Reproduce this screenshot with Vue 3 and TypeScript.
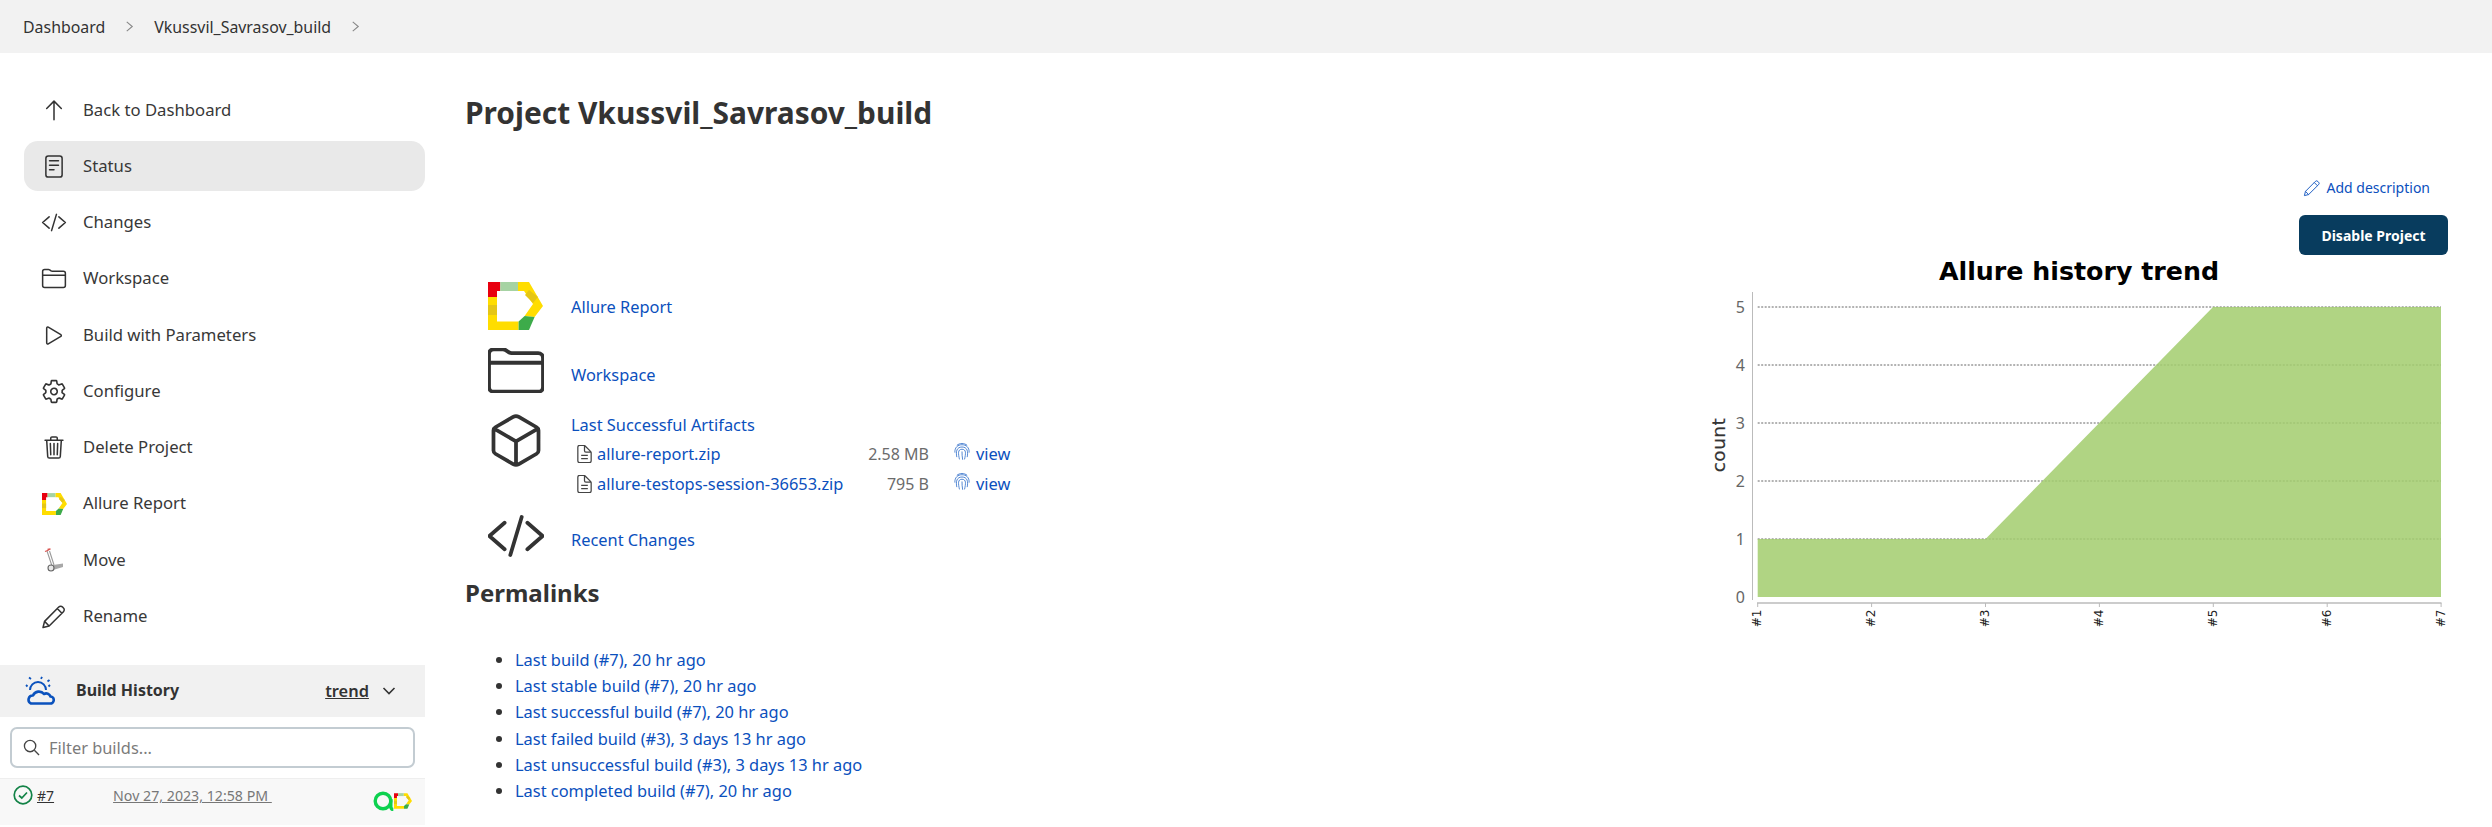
<script setup lang="ts">
interface NavItem { label: string; icon: string; active?: boolean }
const navItems: NavItem[] = [
  { label: 'Back to Dashboard', icon: 'up' },
  { label: 'Status', icon: 'doc', active: true },
  { label: 'Changes', icon: 'code' },
  { label: 'Workspace', icon: 'folder' },
  { label: 'Build with Parameters', icon: 'play' },
  { label: 'Configure', icon: 'gear' },
  { label: 'Delete Project', icon: 'trash' },
  { label: 'Allure Report', icon: 'allure' },
  { label: 'Move', icon: 'move' },
  { label: 'Rename', icon: 'pencil' },
]
const paths: Record<string, string> = {
  up: 'M256 72v368M112 216L256 72l144 144',
  code: 'M160 368L32 256l128-112M352 368l128-112-128-112M304 96l-96 320',
  folder: 'M440 432H72a40 40 0 01-40-40V120a40 40 0 0140-40h75.89a40 40 0 0122.19 6.72l27.84 18.56a40 40 0 0022.19 6.72H440a40 40 0 0140 40v240a40 40 0 01-40 40zM32 192h448',
  play: 'M112 111v290c0 17.44 17 28.52 31 20.16l247.9-148.37c12.12-7.25 12.12-26.33 0-33.58L143 90.84c-14-8.36-31 2.72-31 20.16z',
  doc: 'M144 48h224a48 48 0 0148 48v320a48 48 0 01-48 48H144a48 48 0 01-48-48V96a48 48 0 0148-48zM168 144h176M168 232h176M168 320h88',
  gear: 'M262.29 192.31a64 64 0 1057.4 57.4 64.13 64.13 0 00-57.4-57.4zM416.39 256a154.34 154.34 0 01-1.53 20.79l45.21 35.46a10.81 10.81 0 012.45 13.75l-42.77 74a10.81 10.81 0 01-13.14 4.59l-44.9-18.08a16.11 16.11 0 00-15.17 1.75A164.48 164.48 0 01325 400.8a15.94 15.94 0 00-8.82 12.14l-6.73 47.89a11.08 11.08 0 01-10.68 9.17h-85.54a11.11 11.11 0 01-10.69-8.87l-6.72-47.82a16.07 16.07 0 00-9-12.22 155.3 155.3 0 01-21.46-12.57 16 16 0 00-15.11-1.71l-44.89 18.07a10.81 10.81 0 01-13.14-4.58l-42.77-74a10.8 10.8 0 012.45-13.75l38.21-30a16.05 16.05 0 006-14.08c-.36-4.17-.58-8.33-.58-12.5s.21-8.27.58-12.35a16 16 0 00-6.07-13.94l-38.19-30A10.81 10.81 0 0149.48 186l42.77-74a10.81 10.81 0 0113.14-4.59l44.9 18.08a16.11 16.11 0 0015.17-1.75A164.48 164.48 0 01187 111.2a15.94 15.94 0 008.82-12.14l6.73-47.89A11.08 11.08 0 01213.23 42h85.54a11.11 11.11 0 0110.69 8.87l6.72 47.82a16.07 16.07 0 009 12.22 155.3 155.3 0 0121.46 12.57 16 16 0 0015.11 1.71l44.89-18.07a10.81 10.81 0 0113.14 4.58l42.77 74a10.8 10.8 0 01-2.45 13.75l-38.21 30a16.05 16.05 0 00-6.07 14.08c.33 4.14.55 8.3.55 12.47z',
  trash: 'M112 112l20 320c.95 18.49 14.4 32 32 32h184c17.67 0 30.87-13.51 32-32l20-320M80 112h352M192 112V72a23.93 23.93 0 0124-24h80a23.93 23.93 0 0124 24v40M256 176v224M184 176l8 224M328 176l-8 224',
  pencil: 'M40 472l30-120L350 70a52 52 0 0174 0l18 18a52 52 0 010 74L160 442zM320 100l92 92M70 352l90 90',
  cube: 'M448 341.37V170.61A32 32 0 00432.11 143l-152-88.46a47.94 47.94 0 00-48.24 0L79.89 143A32 32 0 0064 170.61v170.76A32 32 0 0079.89 369l152 88.46a48 48 0 0048.24 0l152-88.46A32 32 0 00448 341.37zM69 153.99l187 110 187-110M256 463.99v-200',
  file: 'M416 221.25V416a48 48 0 01-48 48H144a48 48 0 01-48-48V96a48 48 0 0148-48h98.75a32 32 0 0122.62 9.37l141.26 141.26a32 32 0 019.37 22.62zM256 56v120a32 32 0 0032 32h120M176 288h160M176 368h160',
}
const logoPieces = [
  { c: '#ffdd00', p: '0,15 9,15 9,39.6 30.6,39.6 30.6,48 0,48' },
  { c: '#e5c615', p: '0,23 9,23 9,33 0,33' },
  { c: '#e8000f', p: '0,0 12.3,0 12.3,9 9,9 9,15 0,15' },
  { c: '#a6d3a3', p: '12.3,0 30,0 30,9 12.3,9' },
  { c: '#ffdd00', p: '30,0 41,0 55,24 46.6,35 36.6,34 45,22 36,9 30,9' },
  { c: '#e5c615', p: '41,8 50,15 45,21 37,13' },
  { c: '#3dab4a', p: '36.6,34 46.6,35 41,48 30.6,48 30.6,39.6' },
]
const artifacts = [
  { name: 'allure-report.zip', size: '2.58 MB' },
  { name: 'allure-testops-session-36653.zip', size: '795 B' },
]
const permalinks = [
  'Last build (#7), 20 hr ago',
  'Last stable build (#7), 20 hr ago',
  'Last successful build (#7), 20 hr ago',
  'Last failed build (#3), 3 days 13 hr ago',
  'Last unsuccessful build (#3), 3 days 13 hr ago',
  'Last completed build (#7), 20 hr ago',
]
const fingerprintArcs = [
  'M5.500 3.500C9 .5 15 .5 18.500 3.500',
  'M2.500 13c-.5-6.500 4-10 9.500-10s10 3.500 9.500 10',
  'M5 19c-1.500-7 0-13 7-13s8.500 6 7 13',
  'M8.500 22c-1.500-7-2.500-13 3.500-13s5 6 3.500 13',
  'M12 12.500c0 3 .2 6.500.8 10',
]
const yTicks = [0, 1, 2, 3, 4, 5].map((v) => ({ v, y: 342 - v * 58 }))
const xTicks = [1, 2, 3, 4, 5, 6, 7].map((n) => ({ n, x: 57.7 + (n - 1) * 113.9 }))
</script>

<template>
  <div class="page">
    <nav class="crumbs">
      <span>Dashboard</span>
      <svg class="crumb-sep" viewBox="0 0 12 12"><path d="M3 1l6 5-6 5" /></svg>
      <span>Vkussvil_Savrasov_build</span>
      <svg class="crumb-sep" viewBox="0 0 12 12"><path d="M3 1l6 5-6 5" /></svg>
    </nav>

    <div class="layout">
      <aside class="side">
        <ul class="nav">
          <li v-for="item in navItems" :key="item.label" class="nav-item" :class="{ active: item.active }">
            <span class="nav-icon">
              <svg v-if="item.icon === 'allure'" class="logo-sm" viewBox="0 0 55 48">
                <polygon v-for="(s, i) in logoPieces" :key="i" :points="s.p" :fill="s.c" />
              </svg>
              <svg v-else-if="item.icon === 'move'" class="move-ic" viewBox="0 0 20 24">
                <path d="M3 3l5 15M5.500 3l4.500 14" stroke="#9a9a9a" stroke-width="1.100" fill="none" />
                <path d="M1 3.500l4-1.500M3.500 1.500l3-.5" stroke="#d9534f" stroke-width="1.300" fill="none" />
                <path d="M9 17l10-1.500v3.500l-10 3z" fill="#a8a8a8" />
                <circle cx="7" cy="20" r="3" fill="#e8e8e8" stroke="#666" stroke-width="1.100" />
              </svg>
              <svg v-else viewBox="0 0 512 512" class="ion" :class="'ion-' + item.icon"><path :d="paths[item.icon]" /></svg>
            </span>
            <span class="nav-label">{{ item.label }}</span>
          </li>
        </ul>

        <div class="history-head">
          <svg class="weather" viewBox="0 0 30 30">
            <path d="M5 14a8 8 0 0116 0" fill="none" stroke="#0b52bd" stroke-width="2" />
            <path d="M6 27.500h19a3.500 3.500 0 00.5-7 4.500 4.500 0 00-6.500-2.500 6.500 6.500 0 00-11 1.500 4.200 4.200 0 00-2 8z" fill="#f1f1f1" stroke="#0b52bd" stroke-width="2.600" stroke-linejoin="round" />
            <path d="M4 1.500l2 1.500M17 .8l-1 2M24.500 4l-2 1.500M1 9l1.500 1.500M25 9l-1.500 1.500" stroke="#0b52bd" stroke-width="1.800" fill="none" />
          </svg>
          <strong class="history-title">Build History</strong>
          <span class="trend">trend</span>
          <svg class="chev" viewBox="0 0 14 10"><path d="M1.500 2L7 7.500 12.500 2" /></svg>
        </div>

        <div class="filter">
          <svg class="search" viewBox="0 0 18 18"><circle cx="7.500" cy="7.500" r="6" /><path d="M12 12l5 5" /></svg>
          <span>Filter builds...</span>
        </div>

        <div class="build-row">
          <svg class="check" viewBox="0 0 20 20"><circle cx="10" cy="10" r="8.800" /><path d="M6 10.500l2.800 2.500L14 7.500" /></svg>
          <a class="build-num">#7</a>
          <a class="build-date">Nov 27, 2023, 12:58 PM&nbsp;</a>
          <span class="build-logos">
            <svg class="a-mark" viewBox="0 0 21 20"><circle cx="10" cy="10" r="7.800" /><path d="M17.800 8v8a2.500 2.500 0 002.500 2.500" /></svg>
            <svg class="logo-xs" viewBox="0 0 55 48">
              <polygon v-for="(s, i) in logoPieces" :key="i" :points="s.p" :fill="s.c" />
            </svg>
          </span>
        </div>
      </aside>

      <main class="main">
        <h1 class="title">Project Vkussvil_Savrasov_build</h1>

        <div class="actions">
          <a class="add-desc">
            <svg class="add-ic" viewBox="0 0 512 512"><path :d="paths.pencil" /></svg>
            Add description
          </a>
          <button class="disable">Disable Project</button>
        </div>

        <div class="content">
          <section class="left">
            <div class="row row-1">
              <span class="row-icon">
                <svg class="logo-lg" viewBox="0 0 55 48">
                  <polygon v-for="(s, i) in logoPieces" :key="i" :points="s.p" :fill="s.c" />
                </svg>
              </span>
              <a class="link">Allure Report</a>
            </div>
            <div class="row row-2">
              <span class="row-icon">
                <svg class="big" viewBox="24 70 464 372"><path class="big-path" :d="paths.folder" /></svg>
              </span>
              <a class="link">Workspace</a>
            </div>
            <div class="row row-3">
              <span class="row-icon">
                <svg class="cube" viewBox="40 30 432 452"><path class="big-path" :d="paths.cube" /></svg>
              </span>
              <div class="artifacts">
                <a class="link art-head">Last Successful Artifacts</a>
                <div class="art-table">
                  <template v-for="a in artifacts" :key="a.name">
                    <svg class="file" viewBox="80 40 352 432"><path :d="paths.file" /></svg>
                    <a class="link art-name">{{ a.name }}</a>
                    <span class="size">{{ a.size }}</span>
                    <svg class="print" viewBox="0 0 24 24"><path v-for="(d, i) in fingerprintArcs" :key="i" :d="d" /></svg>
                    <a class="link">view</a>
                  </template>
                </div>
              </div>
            </div>
            <div class="row row-4">
              <span class="row-icon">
                <svg class="big code-big" viewBox="20 80 472 352"><path class="big-path" :d="paths.code" /></svg>
              </span>
              <a class="link">Recent Changes</a>
            </div>

            <h2 class="perma">Permalinks</h2>
            <ul class="perma-list">
              <li v-for="p in permalinks" :key="p"><a class="link">{{ p }}</a></li>
            </ul>
          </section>

          <svg class="chart" width="748" height="380" viewBox="0 0 748 380">
            <text x="379" y="25" class="chart-title" text-anchor="middle">Allure history trend</text>
            <line v-for="t in yTicks.slice(1)" :key="t.v" x1="57.7" x2="741" :y1="t.y" :y2="t.y" class="grid" />
            <polygon points="57.7,342 57.7,284 285.500,284 513,52 741,52 741,342" fill="#a2cd6d" fill-opacity="0.85" />
            <line x1="52.5" x2="52.5" y1="37" y2="345" class="axis" />
            <line x1="57" x2="741.500" y1="348" y2="348" class="axis-x" />
            <text v-for="t in yTicks" :key="'y' + t.v" x="45" :y="t.y + 6" class="y-label" text-anchor="end">{{ t.v }}</text>
            <g v-for="t in xTicks" :key="t.n">
              <line :x1="t.x" :x2="t.x" y1="348" y2="352" class="axis" />
              <text class="x-label" text-anchor="middle" :transform="`translate(${t.x + 3.5} 363.5) rotate(-90)`">#{{ t.n }}</text>
            </g>
            <text class="y-title" text-anchor="middle" transform="translate(25 190) rotate(-90)">count</text>
          </svg>
        </div>
      </main>
    </div>
  </div>
</template>

<style>
html, body { margin: 0; background: #fff; overflow: hidden; }
</style>

<style scoped>
.page {
  width: 2492px;
  height: 827px;
  overflow: hidden;
  font-family: "Noto Sans", "Open Sans", sans-serif;
  font-size: 16.4px;
  color: #333;
}
.crumbs {
  height: 53px;
  background: #f2f2f2;
  display: flex;
  align-items: center;
  padding-left: 23px;
  gap: 19px;
  box-sizing: border-box;
  font-size: 15.9px;
}
.crumb-sep { width: 11px; height: 11px; fill: none; stroke: #888; stroke-width: 1.2; }
.layout { display: flex; }
.side { width: 425px; flex: none; padding-top: 32px; }
.nav { list-style: none; margin: 0 0 24px 24px; padding: 0; display: flex; flex-direction: column; gap: 6.25px; font-size: 16.7px; }
.nav-item {
  height: 50px;
  border-radius: 14px;
  display: flex;
  align-items: center;
  padding-left: 17px;
  gap: 16px;
  color: #383838;
}
.nav-item.active { background: #e9e9e9; }
.nav-label { padding-bottom: 2px; }
.nav-icon { width: 26px; height: 26px; display: flex; align-items: center; justify-content: center; }
.ion { width: 27px; height: 27px; fill: none; stroke: #333; stroke-width: 30; stroke-linecap: round; stroke-linejoin: round; }
.ion-gear { stroke-width: 32; }
.logo-sm { width: 25px; height: 22px; flex: none; }
.move-ic { width: 20px; height: 24px; flex: none; }
.history-head {
  height: 52px;
  background: #f1f1f1;
  display: flex;
  align-items: center;
  padding-left: 25px;
}
.weather { width: 30px; height: 30px; flex: none; }
.history-title { margin-left: 21px; font-size: 16px; font-weight: 700; padding-bottom: 2px; }
.trend { margin-left: 146px; font-weight: 600; text-decoration: underline; padding-bottom: 2px; }
.chev { width: 14px; height: 10px; margin-left: 13px; fill: none; stroke: #333; stroke-width: 1.6; }
.filter {
  margin: 10px 10px 10px;
  height: 41px;
  box-sizing: border-box;
  border: 2px solid #c3ccd2;
  border-radius: 7px;
  display: flex;
  align-items: center;
  padding-left: 11px;
  gap: 9px;
  color: #7b7b7b;
}
.search { width: 17px; height: 17px; fill: none; stroke: #444; stroke-width: 1.4; }
.build-row {
  height: 47px;
  background: #f8f8f8;
  border-top: 1px solid #eee;
  box-sizing: border-box;
  display: flex;
  align-items: flex-start;
  position: relative;
  padding: 6px 0 0 13px;
}
.check { width: 20px; height: 20px; flex: none; fill: none; stroke: #138347; stroke-width: 1.7; }
.build-num { margin-left: 4px; font-size: 14px; text-decoration: underline; color: #333; line-height: 22px; }
.build-date { margin-left: 59px; font-size: 14.2px; text-decoration: underline; color: #777; line-height: 22px; }
.build-logos { position: absolute; left: 373px; top: 12px; display: flex; align-items: center; }
.a-mark { width: 21px; height: 20px; fill: none; stroke: #0dd14f; stroke-width: 3.4; }
.logo-xs { width: 18px; height: 16px; }

.main { flex: 1; padding: 40px 44px 0 40px; min-width: 0; }
.title { margin: 0; font-size: 29.9px; line-height: 40px; font-weight: 700; color: #333; }
.actions { display: flex; flex-direction: column; align-items: flex-end; margin-top: 43px; }
.add-desc { color: #0b50bd; font-size: 14px; line-height: 24px; display: flex; align-items: center; gap: 5px; margin-right: 18px; }
.add-ic { width: 18px; height: 18px; fill: none; stroke: #0b50bd; stroke-width: 26; stroke-linejoin: round; }
.disable {
  margin-top: 15px;
  width: 149px;
  height: 40px;
  border: 0;
  border-radius: 6px;
  background: #083c5e;
  color: #fff;
  font: 700 14px "Noto Sans", sans-serif;
}
.content { display: flex; justify-content: space-between; align-items: flex-start; }
.left { padding-top: 27px; }
.row { display: flex; align-items: flex-start; }
.row-icon { width: 105px; flex: none; padding-left: 22px; box-sizing: border-box; display: block; margin-left: 1px; }
.row-1 { height: 66px; line-height: 50px; }
.row-2 { height: 66px; line-height: 54px; }
.row-3 { height: 101px; }
.row-4 { height: 62px; line-height: 50px; }
.link { color: #0b50bd; }
.logo-lg { width: 55px; height: 48px; display: block; }
.big { width: 56px; height: 45px; display: block; }
.code-big { height: 42px; }
.cube { width: 56px; height: 53px; display: block; }
.big-path { fill: none; stroke: #333; stroke-width: 32; stroke-linecap: round; stroke-linejoin: round; }
.artifacts { line-height: 22px; }
.art-head { display: block; }
.art-table {
  margin-top: 3px;
  display: grid;
  grid-template-columns: 26px 262px 70px 47px auto;
  grid-auto-rows: 30px;
  align-items: center;
}
.art-name { white-space: nowrap; }
.file { width: 15px; height: 18px; margin-left: 6px; fill: none; stroke: #444; stroke-width: 30; stroke-linejoin: round; }
.size { text-align: right; color: #6b6b6b; font-size: 16px; }
.print { width: 18px; height: 21px; margin-left: 24px; margin-bottom: 6px; fill: none; stroke: #1f63c6; stroke-width: 1; stroke-linecap: round; }
.perma { margin: 0; font-size: 24px; line-height: 32px; font-weight: 700; color: #333; }
.perma-list { margin: 38px 0 0; padding: 0 0 0 50px; line-height: 26.2px; }
.chart { flex: none; display: block; overflow: visible; }
.chart-title { font: 700 25.3px "DejaVu Sans", sans-serif; fill: #000; }
.grid { stroke: #666; stroke-width: 1; stroke-dasharray: 2 1.5; }
.axis { stroke: #bbb; stroke-width: 1; }
.axis-x { stroke: #ccc; stroke-width: 2; }
.y-label { font: 400 16px "Noto Sans", sans-serif; fill: #666; }
.x-label { font: 400 12px "DejaVu Sans", sans-serif; fill: #222; }
.y-title { font: 400 18.5px "DejaVu Sans", sans-serif; fill: #333; letter-spacing: 0.5px; stroke: #333; stroke-width: 0.2px; }
</style>
